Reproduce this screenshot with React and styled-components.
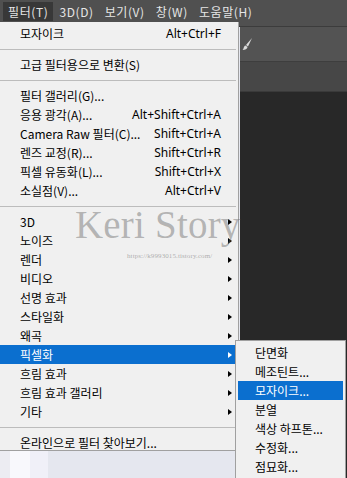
import React from "react";
import styled, { createGlobalStyle } from "styled-components";

const GlobalStyle = createGlobalStyle`
  html, body { margin: 0; padding: 0; background: #282828; }
  body { font-family: "Noto Sans CJK KR", "Noto Sans", sans-serif; }
`;

const Screen = styled.div`
  position: relative;
  width: 347px;
  height: 478px;
  overflow: hidden;
  display: grid;
  grid-template-rows: 27px 1fr;
  background: #282828;
`;

const MenuBar = styled.div`
  display: flex;
  align-items: flex-start;
  padding: 2px 0 0 3px;
  gap: 1px;
  background: #505050;
  border-bottom: 1px solid #3c3c3c;
`;

const MenuTitle = styled.div`
  height: 19px;
  line-height: 19px;
  padding: 0 5px;
  font-size: 12px;
  letter-spacing: 0.6px;
  color: #e6e6e6;
  background: ${(p) => (p.$open ? "#383838" : "transparent")};
  white-space: nowrap;
`;

const Workspace = styled.div`
  display: grid;
  grid-template-columns: 240px 1fr;
`;

const DocStrip = styled.div`
  background: linear-gradient(90deg, #ececf2 0 10px, #f8f8fc 10px 30px, #f0f0f8 30px 48px, #e5e7ef 48px);
`;

const RightPane = styled.div`
  display: grid;
  grid-template-rows: 35px 30px 1fr;
`;

const ToolRow = styled.div`
  background: ${(p) => p.$bg};
  border-bottom: 1px solid ${(p) => p.$line || "transparent"};
  display: flex;
  align-items: center;
  padding-left: 2px;
`;

const Dropdown = styled.div`
  position: absolute;
  left: 0;
  top: 22px;
  width: 239px;
  height: 429px;
  padding-top: 2px;
  box-sizing: border-box;
  background: #f0f0f0;
  border-right: 1px solid #a0a0a0;
  border-bottom: 1px solid #a0a0a0;
`;

const Row = styled.div`
  display: flex;
  align-items: center;
  height: 19px;
  padding: 0 6px 0 20px;
  font-size: 12px;
  color: ${(p) => (p.$active ? "#ffffff" : "#000000")};
  background: ${(p) => (p.$active ? "#0b6fcf" : "transparent")};
  white-space: nowrap;
`;

const Label = styled.span`
  flex: 1;
`;

const Shortcut = styled.span`
  margin-right: 11px;
  font-family: "Noto Sans", sans-serif;
  font-size: 12px;
`;

const Arrow = styled.span`
  width: 0;
  height: 0;
  border-top: 3.5px solid transparent;
  border-bottom: 3.5px solid transparent;
  border-left: 4px solid ${(p) => (p.$active ? "#ffffff" : "#000000")};
`;

const Separator = styled.div`
  height: 12px;
  display: flex;
  align-items: center;
  padding-right: 2px;
  &::after {
    content: "";
    flex: 1;
    border-top: 1px solid #bcbcbc;
  }
`;

const Submenu = styled.div`
  position: absolute;
  left: 235px;
  top: 340px;
  width: 111px;
  padding: 2px 2px 0;
  box-sizing: border-box;
  background: #f0f0f0;
  border: 1px solid #a0a0a0;
  border-bottom: none;
  height: 140px;
`;

const SubRow = styled(Row)`
  padding-left: 17px;
`;

const Watermark = styled.div`
  position: absolute;
  left: 75px;
  top: 202px;
  font-family: "Liberation Serif", serif;
  font-size: 39px;
  letter-spacing: 0.2px;
  color: rgba(105, 105, 105, 0.45);
  pointer-events: none;
  white-space: nowrap;
`;

const WatermarkUrl = styled.div`
  position: absolute;
  left: 127px;
  top: 252px;
  font-family: "Liberation Serif", serif;
  font-size: 7px;
  letter-spacing: 0.1px;
  color: rgba(105, 105, 105, 0.5);
  white-space: nowrap;
`;

const Brush = () => (
  <svg width="12" height="14" viewBox="0 0 12 14">
    <path d="M10 1 L4 8 L6 9.5 Z" fill="#dcdcdc" />
    <path d="M3.5 8.5 C1.5 9 2 12 0.5 13 C3 13 5.5 12 5.5 10 Z" fill="#dcdcdc" />
  </svg>
);

const mainItems = [
  { label: "모자이크", key: "Alt+Ctrl+F" },
  "sep",
  { label: "고급 필터용으로 변환(S)" },
  "sep",
  { label: "필터 갤러리(G)..." },
  { label: "응용 광각(A)...", key: "Alt+Shift+Ctrl+A" },
  { label: "Camera Raw 필터(C)...", key: "Shift+Ctrl+A" },
  { label: "렌즈 교정(R)...", key: "Shift+Ctrl+R" },
  { label: "픽셀 유동화(L)...", key: "Shift+Ctrl+X" },
  { label: "소실점(V)...", key: "Alt+Ctrl+V" },
  "sep",
  { label: "3D", sub: true },
  { label: "노이즈", sub: true },
  { label: "렌더", sub: true },
  { label: "비디오", sub: true },
  { label: "선명 효과", sub: true },
  { label: "스타일화", sub: true },
  { label: "왜곡", sub: true },
  { label: "픽셀화", sub: true, active: true },
  { label: "흐림 효과", sub: true },
  { label: "흐림 효과 갤러리", sub: true },
  { label: "기타", sub: true },
  "sep",
  { label: "온라인으로 필터 찾아보기..." },
];

const subItems = ["단면화", "메조틴트...", "모자이크...", "분열", "색상 하프톤...", "수정화...", "점묘화..."];

export default function App() {
  return (
    <>
      <GlobalStyle />
      <Screen>
        <MenuBar>
          <MenuTitle $open>필터(T)</MenuTitle>
          <MenuTitle>3D(D)</MenuTitle>
          <MenuTitle>보기(V)</MenuTitle>
          <MenuTitle>창(W)</MenuTitle>
          <MenuTitle>도움말(H)</MenuTitle>
        </MenuBar>
        <Workspace>
          <DocStrip />
          <RightPane>
            <ToolRow $bg="#535353" $line="#3e3e3e">
              <Brush />
            </ToolRow>
            <ToolRow $bg="#474747" $line="#3a3a3a" />
            <ToolRow $bg="#282828" />
          </RightPane>
        </Workspace>

        <Dropdown>
          {mainItems.map((it, i) =>
            it === "sep" ? (
              <Separator key={i} />
            ) : (
              <Row key={i} $active={it.active}>
                <Label>{it.label}</Label>
                {it.key && <Shortcut>{it.key}</Shortcut>}
                {it.sub && <Arrow $active={it.active} />}
              </Row>
            )
          )}
        </Dropdown>

        <Watermark>Keri Story</Watermark>
        <WatermarkUrl>https://k9993015.tistory.com/</WatermarkUrl>

        <Submenu>
          {subItems.map((s, i) => (
            <SubRow key={i} $active={i === 2}>
              {s}
            </SubRow>
          ))}
        </Submenu>
      </Screen>
    </>
  );
}
